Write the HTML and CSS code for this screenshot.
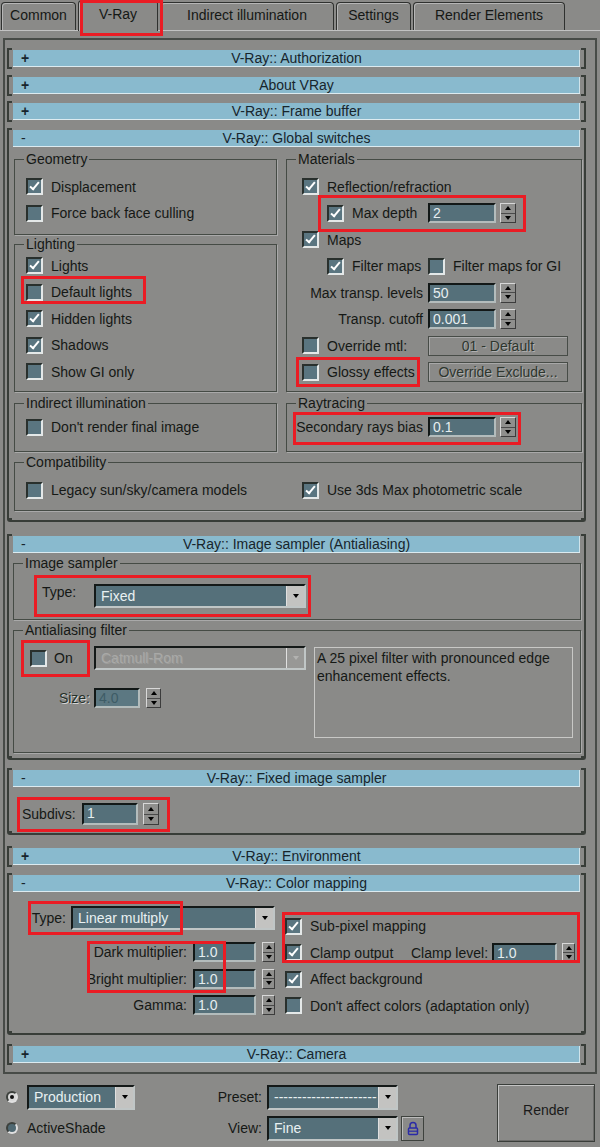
FILE: index.html
```html
<!DOCTYPE html>
<html>
<head>
    <meta charset="utf-8">
    <title>Render Setup: V-Ray</title>
    <link rel="stylesheet" href="styles.css">
</head>
<body>
    <div class="tabbar">
        <div class="tab t-common">Common</div>
        <div class="tab t-vray active hl hl-tab">V-Ray</div>
        <div class="tab t-indirect">Indirect illumination</div>
        <div class="tab t-settings">Settings</div>
        <div class="tab t-elements">Render Elements</div>
    </div>

    <div class="panel">
        <div class="rollout">
            <div class="rhead"><span class="sign">+</span><span class="title">V-Ray:: Authorization</span></div>
        </div>
        <div class="rollout">
            <div class="rhead"><span class="sign">+</span><span class="title">About VRay</span></div>
        </div>
        <div class="rollout">
            <div class="rhead"><span class="sign">+</span><span class="title">V-Ray:: Frame buffer</span></div>
        </div>

        <!-- global switches -->
        <div class="rollout open">
            <div class="rhead"><span class="sign minus">-</span><span class="title">V-Ray:: Global switches</span></div>
            <div class="rbody-global">
                <div class="gs-grid">
                    <div class="gs-left">
                        <fieldset class="grp g-geo">
                            <legend>Geometry</legend>
                            <div class="row"><span class="cb on"></span>Displacement</div>
                            <div class="row"><span class="cb"></span>Force back face culling</div>
                        </fieldset>
                        <fieldset class="grp g-light">
                            <legend>Lighting</legend>
                            <div class="row"><span class="cb on"></span>Lights</div>
                            <div class="row hl hl-deflights"><span class="cb"></span>Default lights</div>
                            <div class="row"><span class="cb on"></span>Hidden lights</div>
                            <div class="row"><span class="cb on"></span>Shadows</div>
                            <div class="row"><span class="cb"></span>Show GI only</div>
                        </fieldset>
                    </div>
                    <fieldset class="grp g-mat">
                        <legend>Materials</legend>
                        <div class="row"><span class="cb on"></span>Reflection/refraction</div>
                        <div class="row hl hl-maxdepth"><span class="lead indent"><span class="cb on"></span>Max depth</span><span class="num">2</span><span class="spin"><i></i><i></i></span></div>
                        <div class="row"><span class="cb on"></span>Maps</div>
                        <div class="row"><span class="lead indent"><span class="cb on"></span>Filter maps</span><span class="cb"></span>Filter maps for GI</div>
                        <div class="row"><span class="lead right">Max transp. levels</span><span class="num">50</span><span class="spin"><i></i><i></i></span></div>
                        <div class="row"><span class="lead right">Transp. cutoff</span><span class="num">0.001</span><span class="spin"><i></i><i></i></span></div>
                        <div class="row"><span class="lead"><span class="cb"></span>Override mtl:</span><span class="btn">01 - Default</span></div>
                        <div class="row hl hl-glossy"><span class="lead"><span class="cb"></span>Glossy effects</span><span class="btn">Override Exclude...</span></div>
                    </fieldset>
                    <fieldset class="grp g-ind">
                        <legend>Indirect illumination</legend>
                        <div class="row"><span class="cb"></span>Don't render final image</div>
                    </fieldset>
                    <fieldset class="grp g-ray">
                        <legend>Raytracing</legend>
                        <div class="row hl hl-secondary"><span class="lead right">Secondary rays bias</span><span class="num">0.1</span><span class="spin"><i></i><i></i></span></div>
                    </fieldset>
                </div>
                <fieldset class="grp g-compat">
                    <legend>Compatibility</legend>
                    <div class="row"><span class="half"><span class="cb"></span>Legacy sun/sky/camera models</span><span class="cb on"></span>Use 3ds Max photometric scale</div>
                </fieldset>
            </div>
        </div>

        <!-- image sampler -->
        <div class="rollout open r-image">
            <div class="rhead"><span class="sign minus">-</span><span class="title">V-Ray:: Image sampler (Antialiasing)</span></div>
            <div class="rbody-image">
                <fieldset class="grp g-sampler">
                    <legend>Image sampler</legend>
                    <div class="row tall hl hl-type">
                        <span class="lead-aa type-lbl">Type:</span>
                        <span class="dd dd-wide"><span class="val">Fixed</span><span class="arr"></span></span>
                    </div>
                </fieldset>
                <fieldset class="grp g-aa">
                    <legend>Antialiasing filter</legend>
                    <div class="aa-body">
                        <div class="aa-left">
                            <div class="row tall hl hl-on">
                                <span class="lead-aa"><span class="cb on-gap"></span>On</span>
                                <span class="dd dd-wide off"><span class="val">Catmull-Rom</span><span class="arr"></span></span>
                            </div>
                            <div class="row size-row">
                                <span class="size-lbl">Size:</span>
                                <span class="num num-size">4.0</span>
                                <span class="spin spin-sm"><i></i><i></i></span>
                            </div>
                        </div>
                        <div class="desc">A 25 pixel filter with pronounced edge enhancement effects.</div>
                    </div>
                </fieldset>
            </div>
        </div>

        <!-- fixed image sampler -->
        <div class="rollout open r-fixed">
            <div class="rhead"><span class="sign minus">-</span><span class="title">V-Ray:: Fixed image sampler</span></div>
            <div class="rbody-fixed">
                <div class="row sub-row hl hl-subdivs">
                    <span class="sub-lbl">Subdivs:</span>
                    <span class="num num-sub">1</span>
                    <span class="spin spin-sub"><i></i><i></i></span>
                </div>
            </div>
        </div>

        <div class="rollout r-env">
            <div class="rhead"><span class="sign">+</span><span class="title">V-Ray:: Environment</span></div>
        </div>

        <!-- color mapping -->
        <div class="rollout open r-color">
            <div class="rhead"><span class="sign minus">-</span><span class="title">V-Ray:: Color mapping</span></div>
            <div class="rbody-color">
                <div class="cm-left">
                    <div class="row cm-type hl hl-cmtype">
                        <span class="cm-type-lbl">Type:</span>
                        <span class="dd dd-cm"><span class="val">Linear multiply</span><span class="arr"></span></span>
                    </div>
                    <div class="cm-rows">
                        <div class="row hl hl-mult"><span class="cm-lbl">Dark multiplier:</span><span class="num num-cm">1.0</span><span class="spin spin-cm"><i></i><i></i></span></div>
                        <div class="row"><span class="cm-lbl">Bright multiplier:</span><span class="num num-cm">1.0</span><span class="spin spin-cm"><i></i><i></i></span></div>
                        <div class="row"><span class="cm-lbl">Gamma:</span><span class="num num-cm">1.0</span><span class="spin spin-cm"><i></i><i></i></span></div>
                    </div>
                </div>
                <div class="cm-right">
                    <div class="row hl hl-subpixel"><span class="cb on"></span>Sub-pixel mapping</div>
                    <div class="row"><span class="cb on"></span><span class="clamp-out">Clamp output</span><span class="clamp-lbl">Clamp level:</span><span class="num num-clamp">1.0</span><span class="spin spin-cm"><i></i><i></i></span></div>
                    <div class="row"><span class="cb on"></span>Affect background</div>
                    <div class="row"><span class="cb"></span>Don't affect colors (adaptation only)</div>
                </div>
            </div>
        </div>

        <div class="rollout r-camera">
            <div class="rhead"><span class="sign">+</span><span class="title">V-Ray:: Camera</span></div>
        </div>
    </div>

    <div class="footer">
        <div class="modes">
            <div class="mode-row">
                <span class="radio on"></span>
                <span class="dd dd-prod"><span class="val">Production</span><span class="arr"></span></span>
            </div>
            <div class="mode-row">
                <span class="radio dark"></span>ActiveShade
            </div>
        </div>
        <div class="presets">
            <div class="mode-row">
                <span class="preset-lbl">Preset:</span>
                <span class="dd dd-preset"><span class="val">----------------------</span><span class="arr"></span></span>
            </div>
            <div class="mode-row">
                <span class="preset-lbl">View:</span>
                <span class="dd dd-preset"><span class="val">Fine</span><span class="arr"></span></span>
                <span class="lock">
                    <svg width="12" height="15" viewBox="0 0 12 15">
                        <path d="M3 7V4.5a3 3 0 0 1 6 0V7" fill="none" stroke="#2b2ba6" stroke-width="1.5"/>
                        <rect x="1.5" y="7" width="9" height="6.5" rx="1" fill="none" stroke="#2b2ba6" stroke-width="1.5"/>
                        <path d="M1.5 10.2h9" stroke="#2b2ba6" stroke-width="1.2"/>
                    </svg>
                </span>
            </div>
        </div>
        <div class="render-btn">Render</div>
    </div>
</body>
</html>
```

FILE: styles.css
```css
body {
    margin: 0;
    width: 600px;
    height: 1147px;
    overflow: hidden;
    background: #8a8a88;
    font-family: "Liberation Sans", Arial, sans-serif;
    font-size: 14px;
    color: #151815;
}

/* tabs */
.tabbar {
    display: flex;
    align-items: flex-end;
    gap: 2px;
    height: 30px;
    padding-left: 1px;
    border-bottom: 1px solid #c2c2c2;
}
.tab {
    height: 28px;
    box-sizing: border-box;
    border: 1px solid #2f312f;
    border-bottom: none;
    border-radius: 4px 4px 0 0;
    box-shadow: inset 1px 1px 0 #b6b6b6;
    display: flex;
    align-items: center;
    justify-content: center;
    padding-bottom: 4px;
    background: #8a8a88;
}
.t-common { width: 75px; }
.t-vray { width: 80px; }
.t-indirect { width: 174px; }
.t-settings { width: 75px; }
.t-elements { width: 152px; }
.tab.active {
    height: 31px;
    margin-bottom: -1px;
    padding-bottom: 4px;
}

/* red annotation boxes */
.hl {
    position: relative;
}
.hl::after {
    content: "";
    position: absolute;
    box-sizing: border-box;
    border: 3px solid #ea1c24;
    z-index: 2;
}
.hl-tab::after { left: 1px; top: -1px; width: 83px; height: 36px; }
.hl-deflights::after { left: -5px; top: -6px; width: 125px; height: 28px; }
.hl-maxdepth::after { left: 16px; top: -8px; width: 208px; height: 37px; }
.hl-glossy::after { left: -6px; top: -5px; width: 124px; height: 30px; }
.hl-secondary::after { left: -9px; top: -5px; width: 228px; height: 33px; }
.hl-type::after { left: 4px; top: -9px; width: 277px; height: 42px; }
.hl-on::after { left: -9px; top: -6px; width: 69px; height: 37px; }
.hl-subdivs::after { left: -5px; top: -6px; width: 153px; height: 35px; }
.hl-cmtype::after { left: 15px; top: -5px; width: 155px; height: 34px; }
.hl-mult::after { left: 74px; top: -1px; width: 139px; height: 52px; }
.hl-subpixel::after { left: -3px; top: -4px; width: 298px; height: 51px; }

/* main panel and rollouts */
.panel {
    margin: 7px 3px 0;
    border: 2px solid #474b47;
    padding: 8px 9px 7px 2px;
}
.rollout {
    border-left: 2px solid #383d38;
    border-right: 2px solid #383d38;
    padding: 2px 0;
    margin-top: 5.7px;
    background:
        linear-gradient(#383d38, #383d38) 0 0 / 3px 2px no-repeat,
        linear-gradient(#383d38, #383d38) 100% 0 / 3px 2px no-repeat,
        linear-gradient(#383d38, #383d38) 0 100% / 3px 2px no-repeat,
        linear-gradient(#383d38, #383d38) 100% 100% / 3px 2px no-repeat;
}
.rollout:first-child { margin-top: 0; }
.rollout.open {
    padding-bottom: 0;
    border-bottom: 2px solid #383d38;
    border-radius: 0 0 3px 3px;
}
.r-image { margin-top: 12px; }
.r-fixed { margin-top: 8px; }
.r-env { margin-top: 11px; }
.r-color { margin-top: 6px; }
.r-camera { margin-top: 9px; }

.rhead {
    margin: 0 4px;
    height: 17px;
    box-sizing: border-box;
    background: #89bace;
    border-bottom: 1px solid #dcebf0;
    box-shadow: inset -1px 0 0 #cfe3ea;
    display: grid;
    grid-template-columns: 20px 1fr 20px;
    line-height: 16px;
    color: #17252c;
}
.rhead .sign {
    padding-left: 8px;
    font-weight: bold;
}
.rhead .sign.minus { font-weight: normal; }
.rhead .title { text-align: center; }

/* group boxes */
.grp {
    margin: 0;
    min-width: 0;
    border: 1px solid #454b45;
    box-shadow: 1px 1px 0 #a9a9a9;
    padding: 0 0 0 11px;
}
.grp legend {
    padding: 0 2px;
    margin-left: -2px;
    line-height: 16px;
}

.row {
    display: flex;
    align-items: center;
    height: 20px;
    white-space: nowrap;
}
.row + .row { margin-top: 6.5px; }

.cb {
    position: relative;
    flex: none;
    width: 17px;
    height: 17px;
    box-sizing: border-box;
    margin-right: 8px;
    background: #5a7580;
    border: 2px solid;
    border-color: #29302d #e4e8e8 #e4e8e8 #29302d;
}
.cb.on::after {
    content: "";
    position: absolute;
    left: 4px;
    top: 0;
    width: 3px;
    height: 8px;
    border: solid #fff;
    border-width: 0 2px 2px 0;
    transform: rotate(40deg);
}

.num {
    flex: none;
    width: 68px;
    height: 20px;
    box-sizing: border-box;
    margin-right: 4px;
    padding-left: 3px;
    background: #55707a;
    border: 2px solid;
    border-color: #121817 #b3bcbc #b3bcbc #121817;
    color: #e6eef0;
    line-height: 16px;
}

.spin {
    flex: none;
    display: flex;
    flex-direction: column;
    width: 16px;
    height: 20px;
    box-sizing: border-box;
    border: 1px solid;
    border-color: #d8d8d8 #3c3c3c #3c3c3c #d8d8d8;
    background: #8f8f8d;
}
.spin i {
    flex: 1;
    display: flex;
    align-items: center;
    justify-content: center;
}
.spin i::after {
    content: "";
    border-left: 3px solid transparent;
    border-right: 3px solid transparent;
    border-bottom: 4px solid #000;
}
.spin i + i { border-top: 1px solid #4a4a4a; }
.spin i + i::after {
    border-bottom: 0;
    border-top: 4px solid #000;
}

.btn {
    flex: none;
    width: 140px;
    height: 20px;
    box-sizing: border-box;
    border: 1px solid #474c47;
    box-shadow: inset 1px 1px 0 #a8a8a8;
    text-align: center;
    line-height: 18px;
    color: #2e362e;
    text-shadow: 1px 1px 0 #b0b0b0;
}

.dd {
    flex: none;
    display: flex;
    height: 24px;
    box-sizing: border-box;
    background: #55707a;
    border: 2px solid;
    border-color: #141918 #c0c6c6 #c0c6c6 #141918;
    color: #e9f1f2;
}
.dd .val {
    flex: 1;
    padding-left: 5px;
    line-height: 20px;
    overflow: hidden;
}
.dd .arr {
    width: 17px;
    display: flex;
    align-items: center;
    justify-content: center;
    background: #c3c3c1;
    border-left: 1px solid #e0e0e0;
}
.dd .arr::after {
    content: "";
    border-left: 3.5px solid transparent;
    border-right: 3.5px solid transparent;
    border-top: 4px solid #000;
}
.dd.off {
    background: #8e8e8c;
    color: #a9a9a7;
    text-shadow: 1px 1px 0 #9c9c9a;
}
.dd.off .arr { background: #989896; }
.dd.off .arr::after { border-top-color: #b2b2b0; }

/* global switches */
.rbody-global { padding: 4px 2px 9px 5px; }
.gs-grid {
    display: grid;
    grid-template-columns: 263px 296px;
    column-gap: 9px;
    row-gap: 3px;
}
.g-geo { padding: 9.5px 0 11px 11px; }
.g-light { margin-top: 1px; padding: 3.5px 0 9.5px 11px; }
.g-mat { padding: 9.5px 0 9px 15px; }
.g-ind { padding: 6px 0 14px 11px; }
.g-ray { padding: 6px 0 14px 15px; }
.g-mat legend, .g-ray legend { margin-left: -6px; }
.g-compat { margin-top: 2px; padding: 10px 0 10px 11px; }

.lead {
    flex: none;
    display: flex;
    align-items: center;
    width: 121px;
    margin-right: 5px;
}
.lead.indent { padding-left: 25px; box-sizing: border-box; }
.lead.right { justify-content: flex-end; }
.half {
    display: flex;
    align-items: center;
    width: 276px;
}

/* image sampler */
.rbody-image { padding: 2px 3px 5px 4px; }
.g-sampler { padding: 13px 0 11px 16px; }
.g-aa { margin-top: 2px; padding: 8px 0 14px 16px; }
.g-sampler legend, .g-aa legend { margin-left: -7px; }
.row.tall { height: 24px; }
.lead-aa {
    flex: none;
    display: flex;
    align-items: center;
    width: 64px;
}
.type-lbl {
    align-self: flex-start;
    padding-left: 12px;
    box-sizing: border-box;
}
.cb.on-gap { margin-right: 7px; }
.dd-wide { width: 212px; }
.aa-body {
    display: flex;
    gap: 8px;
}
.aa-left { width: 276px; }
.row.size-row { margin-top: 18px; }
.size-lbl {
    width: 60px;
    margin-right: 4px;
    text-align: right;
    color: #263029;
    text-shadow: 1px 1px 0 #d6d6d6;
}
.num-size {
    width: 46px;
    margin-right: 6px;
    background: #5c7882;
    color: #3e5c66;
}
.spin-sm { width: 15px; }
.desc {
    width: 259px;
    height: 91px;
    box-sizing: border-box;
    margin-top: 1px;
    padding: 1px 2px;
    border: 1px solid #c8c8c6;
    line-height: 18px;
}

/* fixed sampler */
.rbody-fixed { padding: 16px 0 8px 13px; }
.row.sub-row { height: 22px; }
.sub-lbl { margin-right: 5px; width: 55px; }
.num-sub { width: 56px; height: 22px; margin-right: 5px; }
.spin-sub { height: 22px; }

/* color mapping */
.rbody-color {
    display: grid;
    grid-template-columns: 264px 1fr;
    column-gap: 8px;
    padding: 0 4px 17px 4px;
}
.cm-type {
    margin-top: 14px;
    height: 24px;
}
.cm-type-lbl {
    width: 53px;
    margin-right: 5px;
    text-align: right;
}
.dd-cm { width: 204px; }
.cm-rows { margin-top: 12px; }
.cm-lbl {
    width: 174px;
    margin-right: 6px;
    text-align: right;
}
.num-cm { width: 63px; margin-right: 6px; }
.spin-cm { width: 13px; }
.cm-right { padding-top: 24px; }
.clamp-out { width: 101px; }
.clamp-lbl { width: 74px; margin-right: 7px; }
.num-clamp { width: 65px; margin-right: 5px; }

/* bottom bar */
.footer {
    display: flex;
    padding: 11px 5px 0 6px;
}
.modes { width: 194px; }
.presets { width: 226px; }
.mode-row {
    display: flex;
    align-items: center;
    height: 25px;
}
.mode-row + .mode-row { margin-top: 6px; }
.radio {
    flex: none;
    display: flex;
    align-items: center;
    justify-content: center;
    width: 12px;
    height: 12px;
    box-sizing: border-box;
    margin-right: 9px;
    border-radius: 50%;
    border: 2px solid;
    border-color: #3c403c #e0e0e0 #e0e0e0 #3c403c;
    background: #d8d8d8;
}
.radio.on::after {
    content: "";
    width: 4px;
    height: 4px;
    border-radius: 50%;
    background: #111;
}
.radio.dark { background: #4f6872; }
.dd-prod { width: 108px; height: 25px; }
.dd-prod .val { line-height: 21px; }
.preset-lbl {
    width: 62px;
    margin-right: 5px;
    text-align: right;
}
.dd-preset { width: 131px; height: 25px; }
.dd-preset .val { line-height: 21px; }
.lock {
    display: flex;
    align-items: center;
    justify-content: center;
    width: 23px;
    height: 25px;
    box-sizing: border-box;
    margin-left: 3px;
    border: 1px solid #3e423e;
    box-shadow: inset 1px 1px 0 #bcbcbc;
}
.render-btn {
    margin-left: auto;
    margin-top: -1px;
    width: 98px;
    height: 58px;
    box-sizing: border-box;
    padding-bottom: 6px;
    display: flex;
    align-items: center;
    justify-content: center;
    border: 1px solid #3a3e3a;
    box-shadow: inset 1px 1px 0 #c4c4c4, inset -1px -1px 0 #6c6c6a;
    color: #1a1a1a;
}
```
